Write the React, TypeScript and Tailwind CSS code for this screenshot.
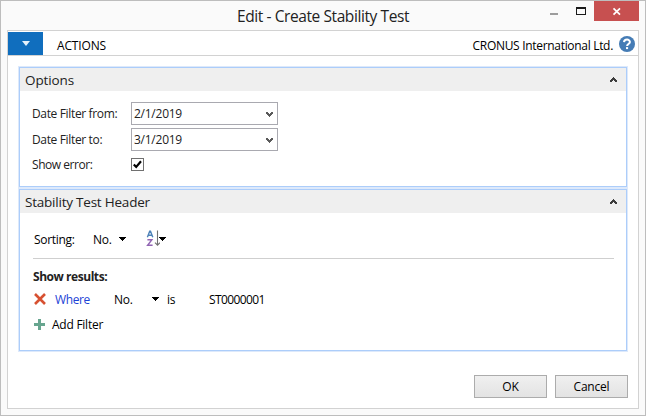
import React from 'react';

const Down = () => (
  <svg className="shrink-0" width="7" height="4" viewBox="0 0 7 4" shapeRendering="crispEdges">
    <path d="M0 0h7v1h-1v1h-1v1h-1v1h-1v-1h-1v-1h-1v-1h-1z" fill="#000" />
  </svg>
);

const Chevron = ({ up = false }: { up?: boolean }) => (
  <svg className={up ? 'shrink-0' : 'mt-px shrink-0 rotate-180'} width="7" height="5" viewBox="0 0 7 5" shapeRendering="crispEdges">
    <path d="M3 0h1v1h1v1h1v1h1v2h-2v-1h-1v-1h-1v1h-1v1h-2v-2h1v-1h1v-1h1z" fill={up ? '#3c3c3c' : '#5a5a5a'} />
  </svg>
);

const Header = ({ title, spacing }: { title: string; spacing: string }) => (
  <div className="flex h-[23px] shrink-0 items-center justify-between bg-[#efefef] pr-[9px] pl-[5px]">
    <span className={`text-[13.5px] leading-[22px] text-[#222] ${spacing}`}>{title}</span>
    <Chevron up />
  </div>
);

const DateField = ({ label, value }: { label: string; value: string }) => (
  <div className="flex h-[23px] items-center">
    <span className="w-[99px] leading-4 tracking-[-0.35px] text-[#222]">{label}</span>
    <div className="flex h-[23px] w-[147px] items-center justify-between border border-[#a9a9b0] bg-white pr-[4px] pl-[2px]">
      <span className="leading-4 tracking-[-0.25px] text-[#222]">{value}</span>
      <Chevron />
    </div>
  </div>
);

const Button = ({ label }: { label: string }) => (
  <button className="flex h-[23px] w-[73px] items-center justify-center border border-[#acacac] bg-linear-to-b from-[#f0f0f0] to-[#e3e3e3] leading-4 text-black">
    <span className="tracking-[-0.2px]">{label}</span>
  </button>
);

export default function App() {
  return (
    <div className="flex h-[416px] w-[646px] flex-col bg-white font-['Open_Sans','Noto_Sans',sans-serif] text-[12px] whitespace-nowrap text-black">
      <div className="flex h-[416px] flex-col border border-[#bdbdbd] bg-[#fafafa] px-[6px] pb-[6px]">
        <div className="flex h-[29px] shrink-0">
          <div className="flex flex-1 justify-center pl-[89px]">
            <span className="mt-[5px] text-[15.5px] leading-5 tracking-[-0.41px] text-[#222]">Edit - Create Stability Test</span>
          </div>
          <svg className="shrink-0" width="89" height="20" viewBox="0 0 89 20" shapeRendering="crispEdges">
            <path d="M0 12h8v2H0z" fill="#9c9c9c" />
            <path d="M26 6h10v8H26zM27 8v5h8V8z" fill="#1a1a1a" fillRule="evenodd" />
            <path d="M44 0h45v20H44z" fill="#c75050" />
            <path d="m63.5 7.3 6.5 6.4m0-6.4-6.5 6.4" stroke="#fff" strokeWidth="1.7" shapeRendering="auto" />
          </svg>
        </div>
        <div className="flex flex-1 flex-col border border-[#d2d2d2] bg-white">
          <div className="flex h-[25px] shrink-0 items-center border-b border-[#d2d2d2]">
            <div className="mt-px flex h-[23px] w-[35px] items-center justify-center bg-[#106ebe]">
              <svg width="8" height="5" viewBox="0 0 8 5"><path d="M0 0h8L4 5z" fill="#e5f1fb" /></svg>
            </div>
            <span className="mt-[5px] ml-[14px] flex-1 text-[12px] leading-4 tracking-[-0.15px]">ACTIONS</span>
            <span className="mt-[5px] mr-[6px] text-[12px] leading-4 tracking-[-0.31px]">CRONUS International Ltd.</span>
            <svg className="mt-[2px] mr-[3px]" width="16" height="16" viewBox="0 0 16 16">
              <circle cx="8" cy="8" r="8" fill="#457cb5" />
              <path d="M5 6.1C5.2 2.8 10.9 2.8 10.9 6c0 2-2.8 2.1-2.8 4" fill="none" stroke="#fff" strokeWidth="2" />
              <path d="M7 11.1h2.1v2H7z" fill="#fff" />
            </svg>
          </div>
          <div className="mt-[10px] mr-[10px] ml-[10px] flex flex-col gap-[2px] bg-[#dde9fb] p-px">
            <section className="h-[120px] border border-[#accdfa] bg-white">
              <Header title="Options" spacing="tracking-[-0.1px]" />
              <div className="flex flex-col pt-[11px] pl-[12px]">
                <DateField label="Date Filter from:" value="2/1/2019" />
                <div className="mt-[3px]">
                  <DateField label="Date Filter to:" value="3/1/2019" />
                </div>
                <div className="mt-[7px] flex h-[13px] items-center">
                  <span className="w-[99px] leading-4 tracking-[-0.45px] text-[#222]">Show error:</span>
                  <span className="flex h-[13px] w-[13px] items-center justify-center border border-[#707070]">
                    <svg width="9" height="9" viewBox="0 0 9 9"><path d="m.8 4.4 2.4 2.5L8 1.3" fill="none" stroke="#000" strokeWidth="2.2" /></svg>
                  </span>
                </div>
              </div>
            </section>
            <section className="h-[162px] border border-[#accdfa] bg-white">
              <Header title="Stability Test Header" spacing="tracking-[-0.22px]" />
              <div className="flex flex-col pr-[12px] pl-[13px] tracking-[-0.25px]">
                <div className="mt-[16px] flex h-[21px] items-center">
                  <span className="w-[60px] pt-px pl-px tracking-[-0.3px]">Sorting:</span>
                  <span className="w-[26px] pt-px">No.</span>
                  <span className="-mt-[2px] flex"><Down /></span>
                  <div className="ml-[20px] flex items-center">
                    <svg className="-mt-[2px]" width="14" height="17" viewBox="0 0 14 17" fill="none">
                      <path d="M1.4 7.2 3.7 1.3h.8l2.3 5.9M2.3 5.3h3.6" stroke="#4d82b8" strokeWidth="1.4" />
                      <path d="M1.4 9.7h4.5L1.6 15.3h5" stroke="#9165b3" strokeWidth="1.4" />
                      <path d="M11.5 .5v15M9 12.7l2.5 2.5 2.5-2.5" stroke="#707070" strokeWidth="1.1" />
                    </svg>
                    <span className="-mt-[2px] -ml-px flex"><Down /></span>
                  </div>
                </div>
                <div className="mt-[8px] h-px bg-[#cfcfcf]" />
                <div className="mt-[8px] flex h-[18px] items-center">
                  <span className="pt-px font-bold tracking-[-0.45px] text-[#222]">Show results:</span>
                </div>
                <div className="mt-[5px] flex h-[18px] items-center">
                  <svg className="ml-px shrink-0" width="12" height="12" viewBox="0 0 12 12"><path d="m1 1 10 10M11 1 1 11" stroke="#d75131" strokeWidth="2.6" /></svg>
                  <span className="w-[67px] pt-px pl-[9px] tracking-[-0.4px] text-[#1d43d6]">Where</span>
                  <span className="w-[39px] pt-px pl-px">No.</span>
                  <span className="-mt-px flex"><Down /></span>
                  <span className="w-[50px] pt-px pl-[8px]">is</span>
                  <span className="pt-px tracking-[-0.6px]">ST0000001</span>
                </div>
                <div className="mt-[7px] flex h-[18px] items-center">
                  <svg className="ml-px" width="11" height="11" viewBox="0 0 11 11" shapeRendering="crispEdges"><path d="M4 0h3v4h4v3H7v4H4V7H0V4h4z" fill="#67a58f" /></svg>
                  <span className="pt-px pl-[7px] tracking-[-0.25px]">Add Filter</span>
                </div>
              </div>
            </section>
          </div>
          <div className="mt-[23px] mr-[10px] flex justify-end gap-2">
            <Button label="OK" />
            <Button label="Cancel" />
          </div>
        </div>
      </div>
    </div>
  );
}
